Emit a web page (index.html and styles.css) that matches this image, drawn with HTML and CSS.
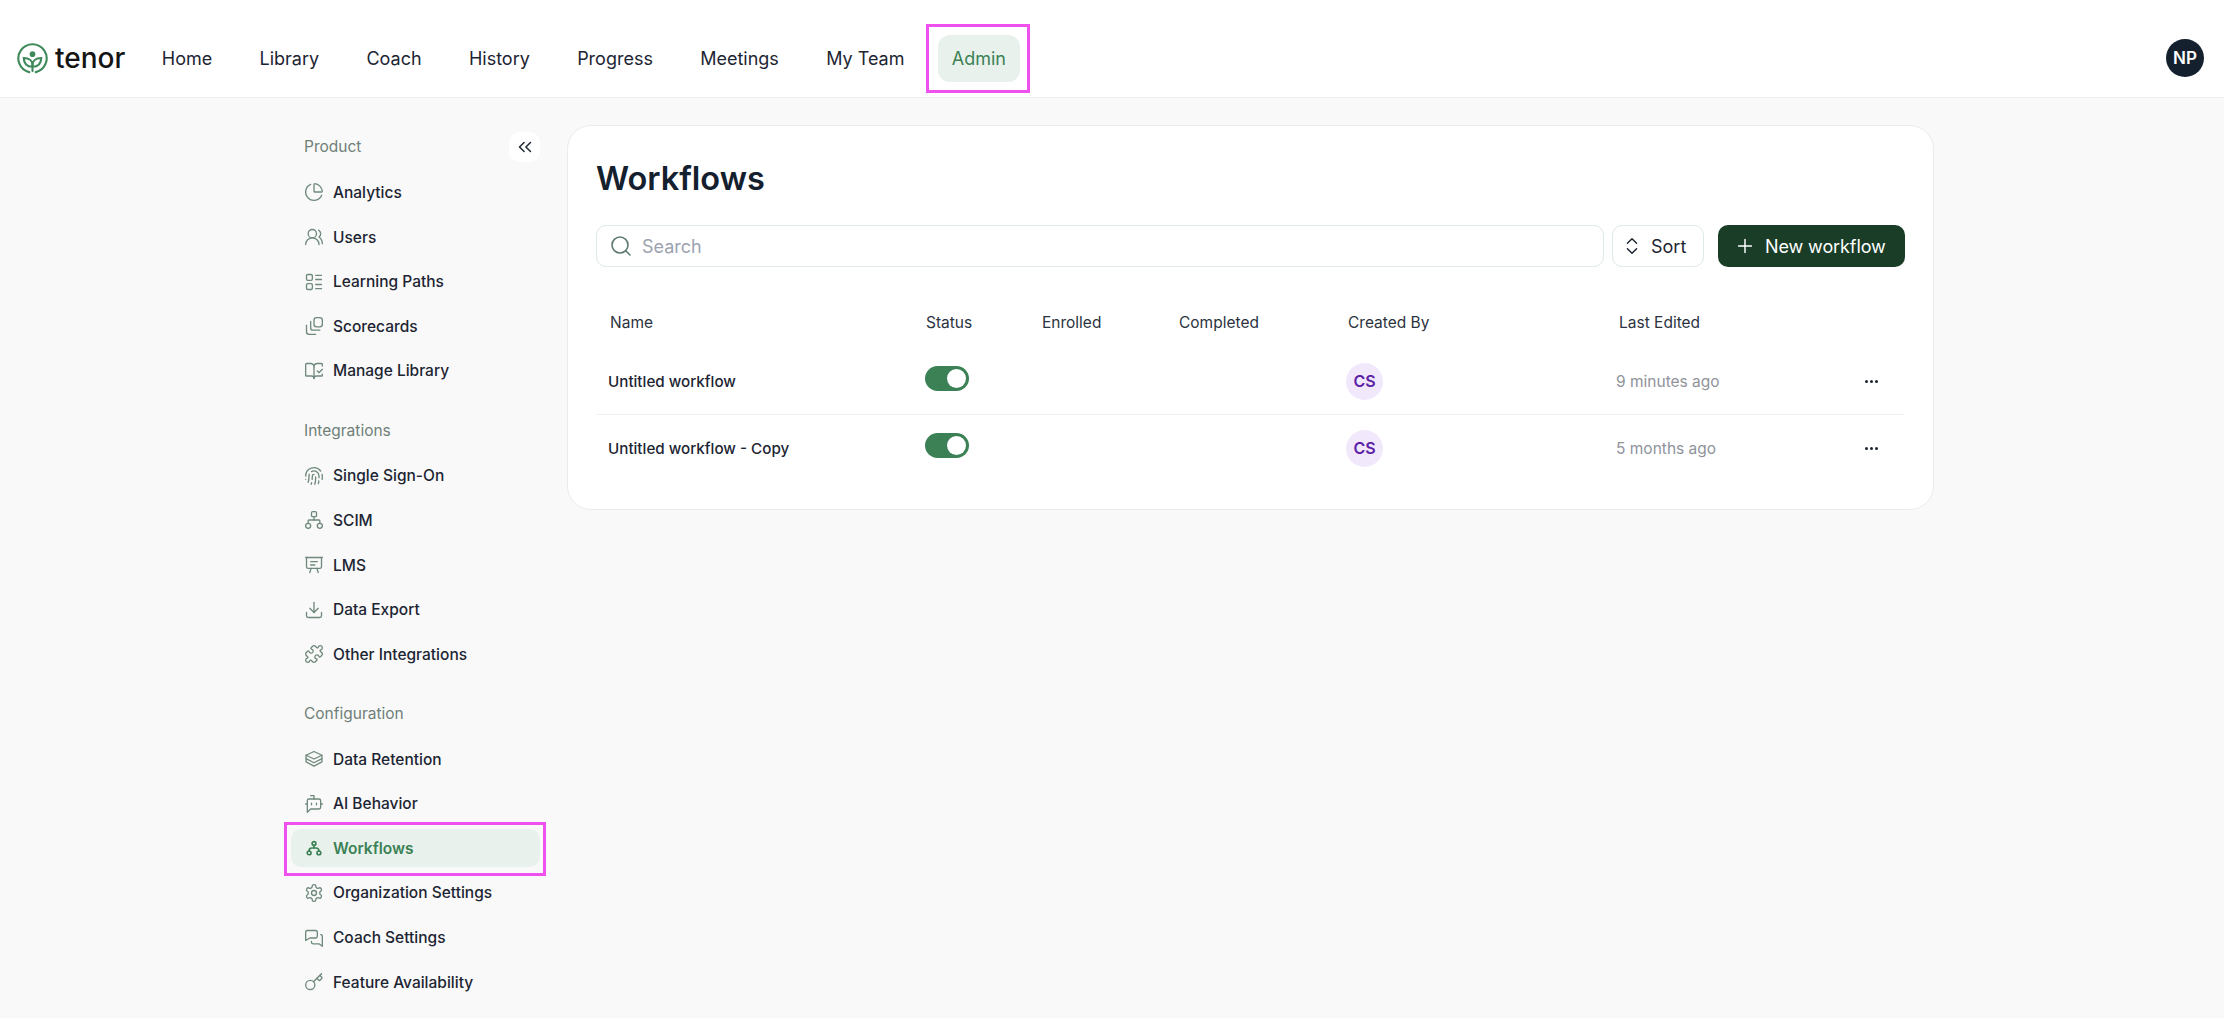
FILE: index.html
```html
<!DOCTYPE html>
<html>

<head>
    <title>Workflows</title>
    <link rel="stylesheet" href="styles.css">
</head>

<body>
    <header class="topbar">
        <div class="brand">
            <svg class="brand-mark" viewBox="0 0 32 32" fill="none" stroke="#3f8a5a" stroke-width="2.2" stroke-linecap="round">
                <path d="M12.6 30.1A14.6 14.6 0 1 1 19.4 30.1" />
                <circle cx="16" cy="11.5" r="2.9" fill="#3f8a5a" stroke="none" />
                <path d="M16 29v-6.500c0-4-3.400-6.900-9-7 .1 5.600 3.300 9 9 9" />
                <path d="M16 22.500c0-4 3.400-6.900 9-7-.1 5.600-3.300 9-9 9" />
            </svg>
            <span class="brand-name">tenor</span>
        </div>
        <nav class="topnav">
            <a class="topnav-link">Home</a>
            <a class="topnav-link">Library</a>
            <a class="topnav-link">Coach</a>
            <a class="topnav-link">History</a>
            <a class="topnav-link">Progress</a>
            <a class="topnav-link">Meetings</a>
            <a class="topnav-link">My Team</a>
            <a class="topnav-link active marked">Admin</a>
        </nav>
        <div class="user-avatar">NP</div>
    </header>

    <div class="layout">
        <aside class="sidebar">
            <div class="side-section">
                <div class="side-head">
                    <span class="side-label">Product</span>
                    <button class="collapse-btn">
                        <svg class="icon" viewBox="0 0 24 24"><path d="m11 17-5-5 5-5" /><path d="m18 17-5-5 5-5" /></svg>
                    </button>
                </div>
                <a class="side-item">
                    <svg class="icon" viewBox="0 0 24 24"><path d="M21 12c.552 0 1.005-.449.95-.998a10 10 0 0 0-8.953-8.951c-.55-.055-.998.398-.998.95v8a1 1 0 0 0 1 1z" /><path d="M21.21 15.89A10 10 0 1 1 8 2.83" /></svg>
                    Analytics
                </a>
                <a class="side-item">
                    <svg class="icon" viewBox="0 0 24 24"><path d="M18 21a8 8 0 0 0-16 0" /><circle cx="10" cy="8" r="5" /><path d="M22 20c0-3.37-2-6.5-4-8a5 5 0 0 0-.45-8.3" /></svg>
                    Users
                </a>
                <a class="side-item">
                    <svg class="icon" viewBox="0 0 24 24"><rect x="3" y="3" width="7" height="7" rx="1.5" /><rect x="3" y="14" width="7" height="7" rx="1.5" /><path d="M14 4h7M14 9h7M14 15h7M14 20h7" /></svg>
                    Learning Paths
                </a>
                <a class="side-item">
                    <svg class="icon" viewBox="0 0 24 24"><rect x="12" y="2" width="10" height="11" rx="3" /><path d="M8 6.500v7.500a3 3 0 0 0 3 3h8" /><path d="M3 11v8a3 3 0 0 0 3 3h8" /></svg>
                    Scorecards
                </a>
                <a class="side-item">
                    <svg class="icon" viewBox="0 0 24 24"><path d="M12 21V7" /><path d="m16 12 2 2 4-4" /><path d="M22 6V4a1 1 0 0 0-1-1h-5a4 4 0 0 0-4 4 4 4 0 0 0-4-4H3a1 1 0 0 0-1 1v13a1 1 0 0 0 1 1h6a3 3 0 0 1 3 3 3 3 0 0 1 3-3h6a1 1 0 0 0 1-1v-1.300" /></svg>
                    Manage Library
                </a>
            </div>

            <div class="side-section">
                <div class="side-label">Integrations</div>
                <a class="side-item">
                    <svg class="icon" viewBox="0 0 24 24"><path d="M12 10a2 2 0 0 0-2 2c0 1.020-.1 2.510-.26 4" /><path d="M14 13.120c0 2.380 0 6.380-1 8.880" /><path d="M17.290 21.020c.12-.6.43-2.300.5-3.020" /><path d="M2 12a10 10 0 0 1 18-6" /><path d="M2 16h.01" /><path d="M21.800 16c.2-2 .131-5.354 0-6" /><path d="M5 19.500C5.500 18 6 15 6 12a6 6 0 0 1 .34-2" /><path d="M8.650 22c.21-.66.45-1.320.57-2" /><path d="M9 6.800a6 6 0 0 1 9 5.200v2" /></svg>
                    Single Sign-On
                </a>
                <a class="side-item">
                    <svg class="icon" viewBox="0 0 24 24"><rect x="9" y="2" width="6" height="6" rx="1.500" /><circle cx="5" cy="19" r="3" /><circle cx="19" cy="19" r="3" /><path d="M5 16v-3a1 1 0 0 1 1-1h12a1 1 0 0 1 1 1v3" /><path d="M12 12V8" /></svg>
                    SCIM
                </a>
                <a class="side-item">
                    <svg class="icon" viewBox="0 0 24 24"><path d="M2 3h20" /><path d="M21 3v11a2 2 0 0 1-2 2H5a2 2 0 0 1-2-2V3" /><path d="m7 21 1.500-5M17 21l-1.500-5" /><path d="M8 8h8M8 12h5" /></svg>
                    LMS
                </a>
                <a class="side-item">
                    <svg class="icon" viewBox="0 0 24 24"><path d="M21 15v4a2 2 0 0 1-2 2H5a2 2 0 0 1-2-2v-4" /><path d="m7 10 5 5 5-5" /><path d="M12 15V3" /></svg>
                    Data Export
                </a>
                <a class="side-item">
                    <svg class="icon" viewBox="0 0 24 24"><path d="M15.390 4.390a1 1 0 0 0 1.680-.474 2.500 2.500 0 1 1 3.014 3.015 1 1 0 0 0-.474 1.680l1.683 1.682a2.414 2.414 0 0 1 0 3.414L19.610 15.390a1 1 0 0 1-1.680-.474 2.500 2.500 0 1 0-3.014 3.015 1 1 0 0 1 .474 1.680l-1.683 1.682a2.414 2.414 0 0 1-3.414 0L8.610 19.610a1 1 0 0 0-1.680.474 2.500 2.500 0 1 1-3.014-3.015 1 1 0 0 0 .474-1.680l-1.683-1.682a2.414 2.414 0 0 1 0-3.414L4.390 8.610a1 1 0 0 1 1.680.474 2.500 2.500 0 1 0 3.014-3.015 1 1 0 0 1-.474-1.680l1.683-1.682a2.414 2.414 0 0 1 3.414 0z" /></svg>
                    Other Integrations
                </a>
            </div>

            <div class="side-section">
                <div class="side-label">Configuration</div>
                <a class="side-item">
                    <svg class="icon" viewBox="0 0 24 24"><path d="M12 3 2.500 7.500 12 12l9.500-4.500z" /><path d="M2.500 7.500v8L12 20.500l9.500-5v-8" /><path d="m2.500 11.500 9.500 5 9.500-5" /></svg>
                    Data Retention
                </a>
                <a class="side-item">
                    <svg class="icon" viewBox="0 0 24 24"><path d="M12 6V2H8" /><path d="m8 18-4 4V8a2 2 0 0 1 2-2h12a2 2 0 0 1 2 2v8a2 2 0 0 1-2 2Z" /><path d="M2 12h2M20 12h2" /><path d="M9 11v2M15 11v2" /></svg>
                    AI Behavior
                </a>
                <a class="side-item active marked">
                    <svg class="icon" viewBox="0 0 24 24"><circle cx="12" cy="6" r="2.500" /><circle cx="5.500" cy="18.500" r="2.500" /><circle cx="18.500" cy="18.500" r="2.500" /><path d="M12 8.500V12" /><path d="M5.500 16v-.5A3.500 3.500 0 0 1 9 12h6a3.500 3.500 0 0 1 3.500 3.500v.5" /></svg>
                    Workflows
                </a>
                <a class="side-item">
                    <svg class="icon" viewBox="0 0 24 24"><path d="M12.220 2h-.44a2 2 0 0 0-2 2v.18a2 2 0 0 1-1 1.730l-.43.25a2 2 0 0 1-2 0l-.15-.08a2 2 0 0 0-2.730.73l-.22.38a2 2 0 0 0 .73 2.730l.15.1a2 2 0 0 1 1 1.720v.51a2 2 0 0 1-1 1.740l-.15.09a2 2 0 0 0-.73 2.730l.22.38a2 2 0 0 0 2.730.73l.15-.08a2 2 0 0 1 2 0l.43.25a2 2 0 0 1 1 1.730V20a2 2 0 0 0 2 2h.44a2 2 0 0 0 2-2v-.18a2 2 0 0 1 1-1.730l.43-.25a2 2 0 0 1 2 0l.15.08a2 2 0 0 0 2.730-.73l.22-.39a2 2 0 0 0-.73-2.730l-.15-.08a2 2 0 0 1-1-1.740v-.5a2 2 0 0 1 1-1.740l.15-.09a2 2 0 0 0 .73-2.730l-.22-.38a2 2 0 0 0-2.730-.73l-.15.08a2 2 0 0 1-2 0l-.43-.25a2 2 0 0 1-1-1.730V4a2 2 0 0 0-2-2z" /><circle cx="12" cy="12" r="3" /></svg>
                    Organization Settings
                </a>
                <a class="side-item">
                    <svg class="icon" viewBox="0 0 24 24"><path d="M16 10a2 2 0 0 1-2 2H7l-5 3V5a2 2 0 0 1 2-2h10a2 2 0 0 1 2 2z" /><path d="M20 8h.5a1.500 1.500 0 0 1 1.500 1.500V22l-4-3h-7a2 2 0 0 1-2-2v-1" /></svg>
                    Coach Settings
                </a>
                <a class="side-item">
                    <svg class="icon" viewBox="0 0 24 24"><path d="m15.500 7.500 2.300 2.300a1 1 0 0 0 1.400 0l2.100-2.100a1 1 0 0 0 0-1.400L19 4" /><path d="m21 2-9.600 9.600" /><circle cx="7.500" cy="15.500" r="5.500" /></svg>
                    Feature Availability
                </a>
            </div>
        </aside>

        <main class="card">
            <h1 class="title">Workflows</h1>
            <div class="toolbar">
                <div class="search">
                    <svg class="icon" viewBox="0 0 24 24"><circle cx="11" cy="11" r="8" /><path d="m21 21-4.300-4.300" /></svg>
                    <span>Search</span>
                </div>
                <button class="sort-btn">
                    <svg class="icon" viewBox="0 0 24 24"><path d="m7 15 5 5 5-5" /><path d="m7 9 5-5 5 5" /></svg>
                    Sort
                </button>
                <button class="new-btn">
                    <svg class="icon" viewBox="0 0 24 24"><path d="M5 12h14M12 5v14" /></svg>
                    New workflow
                </button>
            </div>

            <div class="table">
                <div class="table-head">
                    <div class="head-name">Name</div>
                    <div>Status</div>
                    <div>Enrolled</div>
                    <div>Completed</div>
                    <div>Created By</div>
                    <div>Last Edited</div>
                </div>
                <div class="table-row">
                    <div class="row-name">Untitled workflow</div>
                    <div class="toggle"></div>
                    <div></div>
                    <div></div>
                    <div class="creator">CS</div>
                    <div class="edited">9 minutes ago</div>
                    <div class="more"><i></i><i></i><i></i></div>
                </div>
                <div class="table-row">
                    <div class="row-name">Untitled workflow - Copy</div>
                    <div class="toggle"></div>
                    <div></div>
                    <div></div>
                    <div class="creator">CS</div>
                    <div class="edited">5 months ago</div>
                    <div class="more"><i></i><i></i><i></i></div>
                </div>
            </div>
        </main>
    </div>
</body>

</html>
```

FILE: styles.css
```css
* {
    box-sizing: border-box;
}

body {
    margin: 0;
    height: 1018px;
    overflow: hidden;
    background-color: #f9f9f9;
    color: #1d2533;
    font-family: "Inter", "Liberation Sans", sans-serif;
}

button {
    font-family: inherit;
    cursor: pointer;
}

.icon {
    width: 20px;
    height: 20px;
    flex: none;
    fill: none;
    stroke: currentColor;
    stroke-width: 1.6;
    stroke-linecap: round;
    stroke-linejoin: round;
}

/* top bar */
.topbar {
    height: 98px;
    display: flex;
    align-items: center;
    padding: 19px 20px 0 17px;
    background-color: white;
    border-bottom: 1px solid #eef0ef;
}

.brand {
    display: flex;
    align-items: center;
    gap: 7px;
}

.brand-mark {
    width: 31px;
    height: 31px;
}

.brand-name {
    font-size: 28px;
    font-weight: 500;
    line-height: 32px;
    color: #141414;
}

.topnav {
    display: flex;
    align-items: center;
    gap: 19.300px;
    margin-left: 22.500px;
    flex: 1;
}

.topnav-link {
    height: 47px;
    display: flex;
    align-items: center;
    padding: 0 14px;
    border-radius: 12px;
    font-size: 18px;
}

.topnav-link.active {
    background-color: #e9f1ec;
    color: #3b8155;
}

.marked {
    position: relative;
}

.marked::after {
    content: "";
    position: absolute;
    inset: -11px -10px -11px -12px;
    border: 3px solid #f050ee;
}

.user-avatar {
    width: 38px;
    height: 38px;
    display: flex;
    align-items: center;
    justify-content: center;
    border-radius: 50%;
    background-color: #14202e;
    color: white;
    font-size: 17px;
    font-weight: 600;
}

/* page */
.layout {
    display: flex;
    gap: 27px;
    padding: 27px 0 0 291px;
}

/* sidebar */
.sidebar {
    width: 249px;
    margin-top: 6.500px;
}

.side-section {
    display: flex;
    flex-direction: column;
    gap: 6.600px;
    margin-bottom: 28px;
}

.side-head {
    height: 30px;
    display: flex;
    align-items: center;
    justify-content: space-between;
    margin-bottom: 5.400px;
}

.side-label {
    height: 24px;
    padding-left: 13px;
    margin-top: 1px;
    margin-bottom: 7.400px;
    font-size: 15.500px;
    line-height: 24px;
    color: #6f7f78;
}

.side-head .side-label {
    margin: 0;
}

.collapse-btn {
    width: 31px;
    height: 30px;
    display: flex;
    align-items: center;
    justify-content: center;
    padding: 0;
    border: 0;
    border-radius: 10px;
    background-color: white;
    color: #1d2533;
}

.collapse-btn .icon {
    width: 22px;
    height: 22px;
}

.side-item {
    height: 38px;
    display: flex;
    align-items: center;
    gap: 9px;
    padding-left: 13px;
    border-radius: 10px;
    font-size: 15.500px;
    font-weight: 450;
}

.side-item .icon {
    color: #6f8a7c;
}

.side-item.active {
    background-color: #e9f1ec;
    color: #3b8155;
    font-weight: 600;
}

.side-item.active .icon {
    padding: 1px;
    color: #3b8155;
    stroke-width: 2.200;
}

.side-item.marked::after {
    inset: -7px -6px -9px -7px;
}

/* card */
.card {
    width: 1367px;
    height: 385px;
    padding: 33px 28px 0;
    background-color: white;
    border: 1px solid #eaecec;
    border-radius: 24px;
}

.title {
    margin: 0 0 26px;
    font-size: 32.500px;
    font-weight: 600;
    line-height: 40px;
    color: #14202e;
}

.toolbar {
    display: flex;
    gap: 8px;
    height: 42px;
}

.search {
    flex: 1;
    display: flex;
    align-items: center;
    gap: 9px;
    padding-left: 12px;
    border: 1px solid #dfe9e6;
    border-radius: 10px;
    font-size: 18px;
    color: #9ca3af;
}

.search .icon {
    width: 24px;
    height: 24px;
    color: #5d7a6d;
}

.sort-btn {
    width: 92px;
    display: flex;
    align-items: center;
    gap: 8px;
    padding: 0 0 0 8px;
    background-color: white;
    border: 1px solid #dfe9e6;
    border-radius: 10px;
    font-size: 18px;
    color: #1d2533;
}

.sort-btn .icon,
.new-btn .icon {
    width: 22px;
    height: 22px;
}

.new-btn {
    width: 187px;
    display: flex;
    align-items: center;
    gap: 9px;
    margin-left: 6px;
    padding: 0 0 0 16px;
    background-color: #1a3d27;
    border: 0;
    border-radius: 10px;
    font-size: 18px;
    letter-spacing: -0.1px;
    color: white;
}

/* table */
.table {
    margin-top: 35px;
}

.table-head {
    height: 40px;
    margin-bottom: 6px;
    display: grid;
    grid-template-columns: 330px 116px 137px 169px 271px 1fr;
    align-items: center;
    font-size: 15.500px;
    color: #2b3340;
}

.table-head .head-name {
    padding-left: 14px;
}

.table-row {
    height: 66px;
    display: grid;
    grid-template-columns: 329px 117px 137px 167px 270px 1fr 40px;
    align-items: center;
    font-size: 15.500px;
}

.table-row + .table-row {
    height: 67px;
    border-top: 1px solid #f0f1f1;
}

.row-name {
    padding: 1px 0 0 12px;
    font-size: 15.200px;
    font-weight: 450;
}

.toggle {
    position: relative;
    width: 44px;
    height: 25px;
    margin-bottom: 6px;
    border-radius: 13px;
    background-color: #3b8155;
}

.toggle::after {
    content: "";
    position: absolute;
    top: 3px;
    right: 3px;
    width: 19px;
    height: 19px;
    border-radius: 50%;
    background-color: white;
}

.creator {
    width: 37px;
    height: 37px;
    display: flex;
    align-items: center;
    justify-content: center;
    border-radius: 50%;
    background-color: #f1e9fb;
    color: #5b21a6;
    font-size: 16px;
    font-weight: 600;
}

.edited {
    padding-top: 1px;
    color: #8f939b;
}

.more {
    display: flex;
    gap: 2px;
}

.more i {
    width: 3px;
    height: 3px;
    border-radius: 50%;
    background-color: #1d2533;
}
```
